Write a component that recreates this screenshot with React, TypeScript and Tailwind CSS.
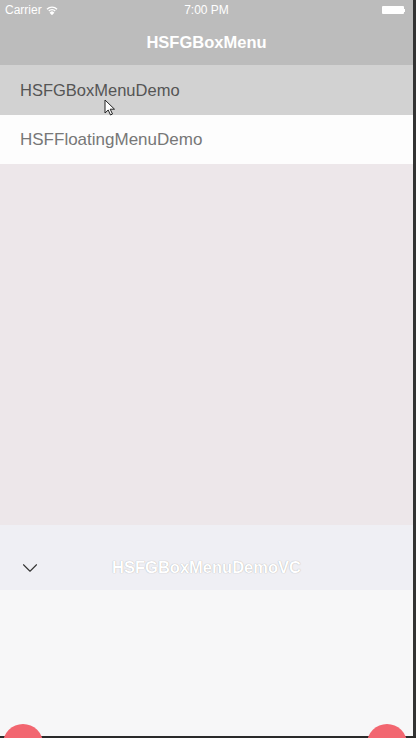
import { ChevronDown } from "lucide-react";

const font = { fontFamily: '"Liberation Sans", Arial, sans-serif' };

function StatusBar() {
  return (
    <div className="relative flex h-[20px] items-center px-[5px] text-[12px] text-white">
      <span className="flex items-center gap-1">
        Carrier
        <svg width="12" height="9" viewBox="0 0 12 9" fill="none" stroke="white" strokeWidth="1.4">
          <path d="M1 3.2a7 7 0 0 1 10 0" />
          <path d="M2.8 5a4.5 4.5 0 0 1 6.4 0" />
          <path d="M6 8.2 4.6 6.8a2 2 0 0 1 2.8 0Z" fill="white" />
        </svg>
      </span>
      <span className="absolute left-0 right-0 text-center">7:00 PM</span>
      <div className="ml-auto mr-[3px] flex items-center">
        <div className="h-[8px] w-[22px] rounded-[1px] bg-white" />
        <div className="h-[3px] w-[1px] bg-white" />
      </div>
    </div>
  );
}

export default function App() {
  return (
    <div className="flex h-[738px] w-[416px] flex-col bg-[#2e2e2e]" style={font}>
      <div className="flex flex-1">
        <div className="relative flex w-[413px] flex-col bg-[#f7f7f8]">
          {/* Header */}
          <div className="bg-[#bcbcbc]">
            <StatusBar />
            <div className="flex h-[45px] items-center justify-center text-[16.5px] font-semibold text-white">
              HSFGBoxMenu
            </div>
          </div>

          {/* Rows */}
          <div className="flex h-[50px] items-center bg-[#d2d2d2] px-[20px] text-[16.5px] text-[#555]">
            HSFGBoxMenuDemo
          </div>
          <div className="flex h-[49px] items-center bg-[#fdfdfd] px-[20px] text-[17px] text-[#777]">
            HSFFloatingMenuDemo
          </div>

          {/* Empty table area */}
          <div className="h-[361px] bg-[#ede7ea]" />

          {/* Bottom menu bar */}
          <div className="relative flex h-[65px] items-center bg-[#efeff4] px-[17px] pt-[20px]">
            <ChevronDown className="h-[26px] w-[26px] text-[#333]" strokeWidth={1} />
            <span className="absolute bottom-0 left-0 right-0 top-[20px] flex items-center justify-center text-[16.5px] font-semibold text-white [text-shadow:0_0_1px_#9a9a9a]">
              HSFGBoxMenuDemoVC
            </span>
          </div>

          <div className="flex-1" />

          {/* Floating buttons peeking */}
          <div className="absolute bottom-[-28px] left-[3px] h-[40px] w-[40px] rounded-full bg-[#f26670]" />
          <div className="absolute bottom-[-28px] left-[367px] h-[40px] w-[40px] rounded-full bg-[#f26670]" />

          {/* Cursor */}
          <svg className="absolute left-[104px] top-[99px]" width="12" height="17" viewBox="0 0 12 17">
            <path d="M1 1v13l3.2-3 2.3 5 2-1-2.3-4.8H10.5Z" fill="white" stroke="#222" strokeWidth="1" />
          </svg>
        </div>
        <div className="w-[3px] bg-[#333]" />
      </div>
      <div className="h-[2px] bg-[#2a2a2a]" />
    </div>
  );
}
